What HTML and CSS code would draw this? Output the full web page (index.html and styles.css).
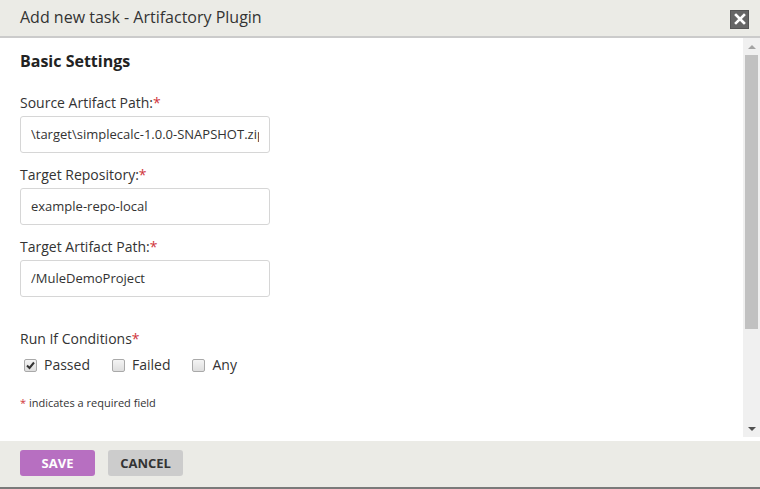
FILE: index.html
```html
<!DOCTYPE html>
<html>
<head>
<meta charset="utf-8">
<link rel="stylesheet" href="styles.css">
</head>
<body>
<div class="dialog">
  <div class="header">
    <div class="title">Add new task - Artifactory Plugin</div>
    <button class="close" aria-label="Close">
      <svg width="12" height="12" viewBox="0 0 12 12"><path d="M2 2 L10 10 M10 2 L2 10" stroke="#fff" stroke-width="2.6" stroke-linecap="square"/></svg>
    </button>
  </div>
  <div class="body">
    <div class="content">
      <h2 class="section">Basic Settings</h2>
      <div class="field">
        <label class="label">Source Artifact Path:<span class="req">*</span></label>
        <div class="input"><span class="value">\target\simplecalc-1.0.0-SNAPSHOT.zip</span></div>
      </div>
      <div class="field">
        <label class="label">Target Repository:<span class="req">*</span></label>
        <div class="input"><span class="value">example-repo-local</span></div>
      </div>
      <div class="field">
        <label class="label">Target Artifact Path:<span class="req">*</span></label>
        <div class="input"><span class="value">/MuleDemoProject</span></div>
      </div>
      <div class="conditions">
        <div class="label">Run If Conditions<span class="req">*</span></div>
        <div class="checks">
          <span class="check"><span class="box checked"><svg width="9" height="9" viewBox="0 0 9 9"><path d="M1 4.5 L3.5 7 L8 1.5" fill="none" stroke="#333" stroke-width="2"/></svg></span>Passed</span>
          <span class="check"><span class="box"></span>Failed</span>
          <span class="check"><span class="box"></span>Any</span>
        </div>
      </div>
      <div class="note"><span class="req">*</span> indicates a required field</div>
    </div>
    <div class="scrollbar">
      <div class="arrow up"></div>
      <div class="track"><div class="thumb"></div></div>
      <div class="arrow down"></div>
    </div>
  </div>
  <div class="footer">
    <button class="btn save">SAVE</button>
    <button class="btn cancel">CANCEL</button>
  </div>
</div>
</body>
</html>
```
FILE: styles.css
```css
* { box-sizing: border-box; }
html, body { margin: 0; padding: 0; }
body {
  font-family: "Open Sans", "Noto Sans", sans-serif;
  color: #333;
  background: #fff;
  width: 760px;
  height: 489px;
  overflow: hidden;
}
.dialog {
  display: flex;
  flex-direction: column;
  height: 489px;
}
.header {
  height: 38px;
  flex: none;
  background: #ebebe6;
  border-bottom: 2px solid #cbcbcb;
  display: flex;
  align-items: center;
  justify-content: space-between;
  padding: 0 11px 2px 20px;
}
.title {
  font-size: 16px;
  line-height: 22px;
  color: #333;
}
.close {
  width: 19px;
  height: 19px;
  padding: 0;
  margin: 0;
  background: #666;
  border: 1px solid #555;
  display: flex;
  align-items: center;
  justify-content: center;
  margin-top: 4px;
}
.body {
  flex: 1;
  display: flex;
  min-height: 0;
}
.content {
  flex: 1;
  padding: 12px 20px 0;
}
.section {
  margin: 0;
  font-size: 16px;
  line-height: 22px;
  font-weight: 700;
  color: #222;
}
.field { margin-top: 21px; }
.field + .field { margin-top: 12px; }
.label {
  display: block;
  font-size: 14px;
  line-height: 20px;
  color: #333;
}
.req { color: #d0353b; }
.input {
  margin-top: 3px;
  width: 250px;
  height: 37px;
  border: 1px solid #d6d6d6;
  border-radius: 3px;
  padding: 0 10px;
  font-size: 13px;
  line-height: 35px;
  color: #333;
}
.value {
  display: block;
  white-space: nowrap;
  overflow: hidden;
}
.conditions { margin-top: 32px; }
.checks {
  display: flex;
  margin-top: 6px;
  font-size: 14px;
  line-height: 20px;
  padding-left: 4px;
}
.check {
  display: flex;
  align-items: center;
  margin-right: 22px;
}
.box {
  width: 13px;
  height: 13px;
  border: 1px solid #a9a9a9;
  border-radius: 2px;
  background: linear-gradient(#f4f4f4, #dedede);
  margin-right: 7px;
  display: flex;
  align-items: center;
  justify-content: center;
}
.note {
  margin-top: 20px;
  font-size: 11px;
  line-height: 16px;
  color: #333;
}
.scrollbar {
  width: 17px;
  flex: none;
  background: #f0f0f0;
  display: flex;
  flex-direction: column;
  margin-bottom: 4px;
}
.arrow {
  height: 17px;
  flex: none;
  display: flex;
  align-items: center;
  justify-content: center;
}
.arrow::before {
  content: "";
  width: 0;
  height: 0;
  border-left: 4px solid transparent;
  border-right: 4px solid transparent;
}
.arrow.up::before { border-bottom: 4px solid #a3a3a3; }
.arrow.down::before { border-top: 4px solid #505050; }
.track {
  flex: 1;
  padding: 0 2px;
}
.thumb {
  height: 274px;
  background: #c1c1c1;
}
.footer {
  height: 48px;
  flex: none;
  background: #ebebe6;
  border-bottom: 2px solid #7a7a7a;
  display: flex;
  align-items: center;
  padding: 0 20px 2px;
  gap: 13px;
}
.btn {
  width: 75px;
  height: 26px;
  border: none;
  border-radius: 3px;
  font-family: "Open Sans", "Noto Sans", sans-serif;
  font-weight: 700;
  font-size: 13px;
  padding: 0;
}
.save { background: #b76fc1; color: #fff; }
.cancel { background: #cccccc; color: #333; }
```
